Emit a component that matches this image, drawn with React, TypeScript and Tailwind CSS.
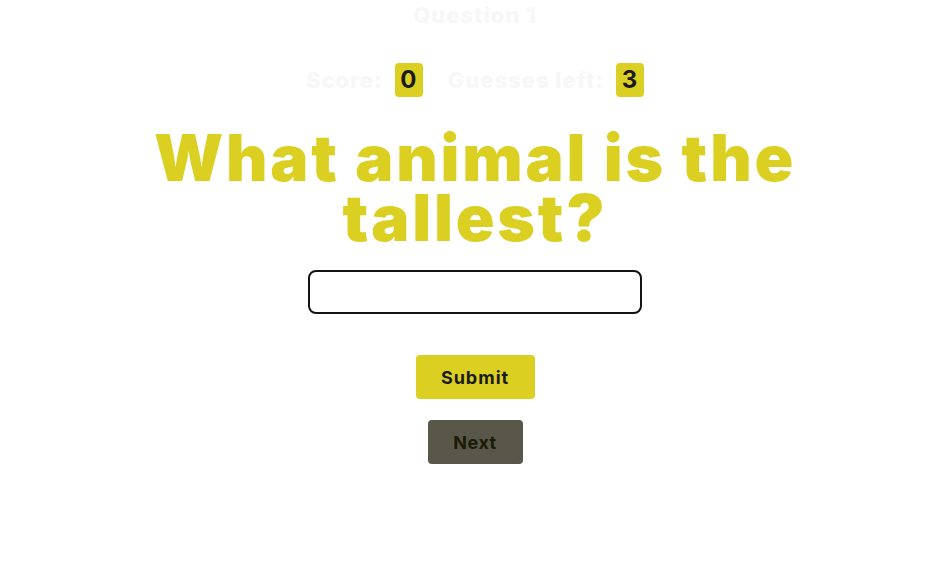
import React from "react";

const Badge = ({ value }: { value: number }) => (
  <span className="inline-flex h-[34px] w-[28px] items-center justify-center rounded-[4px] bg-[#dbd022] text-[24px] font-bold text-[#1a1a1a]">
    {value}
  </span>
);

const App = () => {
  const [answer, setAnswer] = React.useState("");

  return (
    <div className="flex min-h-[571px] w-full flex-col items-center bg-white font-['Inter',sans-serif]">
      <h3 className="mt-[2px] text-[22px] font-extrabold leading-[26px] tracking-[1px] text-[#f7f7f7]">
        Question 1
      </h3>
      <div className="mt-[35px] flex items-center text-[22px] font-extrabold tracking-[1px] text-[#f7f7f7]">
        <span>Score:</span>
        <span className="ml-[12px]">
          <Badge value={0} />
        </span>
        <span className="ml-[25px]">Guesses left:</span>
        <span className="ml-[12px]">
          <Badge value={3} />
        </span>
      </div>
      <h1 className="mt-[31px] w-[700px] text-center text-[64px] font-black leading-[60px] tracking-[2.8px] text-[#dbd022]">
        What animal is the tallest?
      </h1>
      <input
        type="text"
        value={answer}
        onChange={(e) => setAnswer(e.target.value)}
        className="mt-[22px] h-[44px] w-[334px] rounded-[8px] border-2 border-[#141414] px-3 text-[16px] outline-none"
      />
      <button className="mt-[41px] h-[44px] w-[119px] rounded-[4px] bg-[#dbd022] text-[18px] font-bold tracking-[1px] text-[#1a1a1a]">
        Submit
      </button>
      <button className="mt-[21px] h-[44px] w-[95px] rounded-[4px] bg-[#58574a] text-[18px] font-bold tracking-[0.5px] text-[#1d1a05]">
        Next
      </button>
    </div>
  );
};

export default App;
